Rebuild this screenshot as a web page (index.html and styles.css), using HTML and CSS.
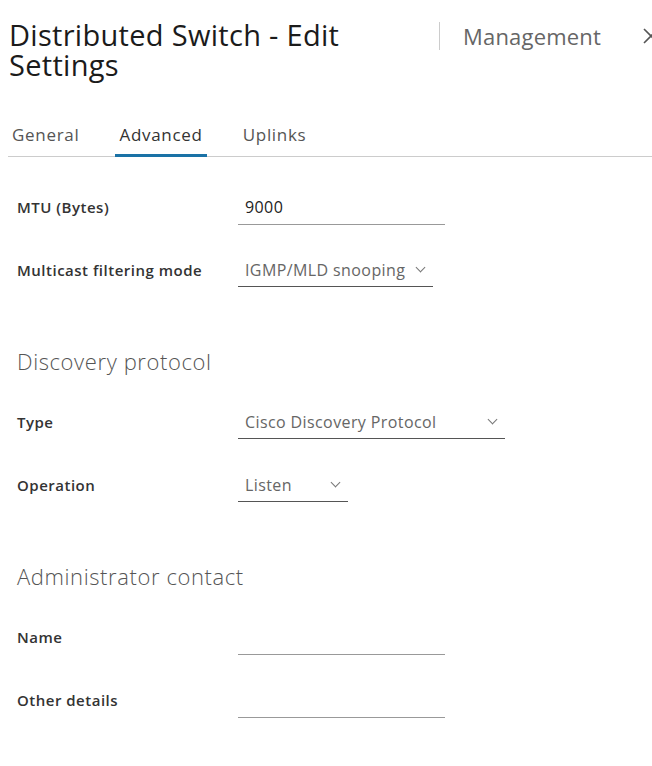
FILE: index.html
```html
<!DOCTYPE html>
<html lang="en">
  <head>
    <meta charset="UTF-8" />
    <title>Distributed Switch - Edit Settings</title>
    <link rel="stylesheet" href="styles.css">
  </head>
  <body>
    <div class="modal">
      <!-- header -->
      <div class="header">
        <h1 class="title">Distributed Switch - Edit Settings</h1>
        <div class="subtitle">Management</div>
        <div class="close">
          <svg width="16" height="20" viewBox="0 0 16 20">
            <path d="M1 3 L15 17 M15 3 L1 17" stroke="#555" stroke-width="1.6" fill="none"/>
          </svg>
        </div>
      </div>

      <!-- tabs -->
      <div class="tabs">
        <div class="tab">General</div>
        <div class="tab active">Advanced</div>
        <div class="tab">Uplinks</div>
      </div>

      <!-- form -->
      <div class="form">
        <div class="row">
          <div class="label">MTU (Bytes)</div>
          <div class="input w207">9000</div>
        </div>
        <div class="row">
          <div class="label">Multicast filtering mode</div>
          <div class="select w195">IGMP/MLD snooping <span class="chev"></span></div>
        </div>

        <h2 class="section">Discovery protocol</h2>
        <div class="row">
          <div class="label">Type</div>
          <div class="select w267">Cisco Discovery Protocol <span class="chev"></span></div>
        </div>
        <div class="row">
          <div class="label">Operation</div>
          <div class="select w110">Listen <span class="chev"></span></div>
        </div>

        <h2 class="section">Administrator contact</h2>
        <div class="row">
          <div class="label">Name</div>
          <div class="input w207"></div>
        </div>
        <div class="row">
          <div class="label">Other details</div>
          <div class="input w207"></div>
        </div>
      </div>
    </div>
  </body>
</html>
```

FILE: styles.css
```css
*,
*::before,
*::after {
  margin: 0;
  padding: 0;
  box-sizing: border-box;
}

body {
  font-family: "Open Sans", "Noto Sans", sans-serif;
  color: #333;
  background: #fff;
  overflow: hidden;
}

.modal {
  width: 680px;
}

/* ---------- header ---------- */
.header {
  display: flex;
  align-items: flex-start;
  padding: 20px 0 0 9px;
  height: 122px;
}

.title {
  width: 430px;
  padding-right: 40px;
  font-size: 29px;
  font-weight: 400;
  letter-spacing: 0.3px;
  line-height: 30px;
  color: #1b1b1b;
}

.subtitle {
  width: 204px;
  padding-left: 23px;
  border-left: 1px solid #ccc;
  height: 28px;
  margin-top: 2px;
  font-size: 22px;
  letter-spacing: 0.2px;
  line-height: 28px;
  color: #666;
}

.close {
  margin-top: 6px;
}

/* ---------- tabs ---------- */
.tabs {
  display: flex;
  margin-left: 8px;
  width: 644px;
  border-bottom: 1px solid #ccc;
}

.tab {
  font-size: 17px;
  letter-spacing: 0.7px;
  line-height: 20px;
  padding: 3px 4px 9px;
  margin-right: 32px;
  color: #555;
  border-bottom: 3px solid transparent;
  margin-bottom: -1px;
}

.tab.active {
  color: #333;
  border-bottom-color: #1a72a6;
}

/* ---------- form ---------- */
.form {
  padding: 19px 0 0 17px;
}

.row {
  display: flex;
  align-items: flex-start;
  height: 63px;
  padding-top: 20px;
}

.label {
  width: 221px;
  font-size: 15px;
  font-weight: 600;
  letter-spacing: 0.5px;
  line-height: 22px;
  color: #333;
}

.input,
.select {
  display: flex;
  align-items: center;
  height: 29px;
  padding: 0 7px 7px;
  font-size: 16px;
  letter-spacing: 0.4px;
  line-height: 22px;
  border-bottom: 1px solid #999;
}

.input {
  color: #222;
}

.select {
  height: 28px;
  padding-bottom: 6px;
  color: #666;
  border-bottom-color: #555;
  justify-content: space-between;
}

.chev {
  width: 7px;
  height: 7px;
  border-right: 1.5px solid #777;
  border-bottom: 1.5px solid #777;
  transform: rotate(45deg);
  margin: -4px 2px 0 8px;
}

.w207 { width: 207px; }
.w195 { width: 195px; }
.w267 { width: 267px; }
.w110 { width: 110px; }

.section {
  font-size: 22px;
  font-weight: 300;
  letter-spacing: 0.6px;
  color: #555;
  height: 89px;
  display: flex;
  align-items: flex-end;
  padding-bottom: 15px;
}
```
